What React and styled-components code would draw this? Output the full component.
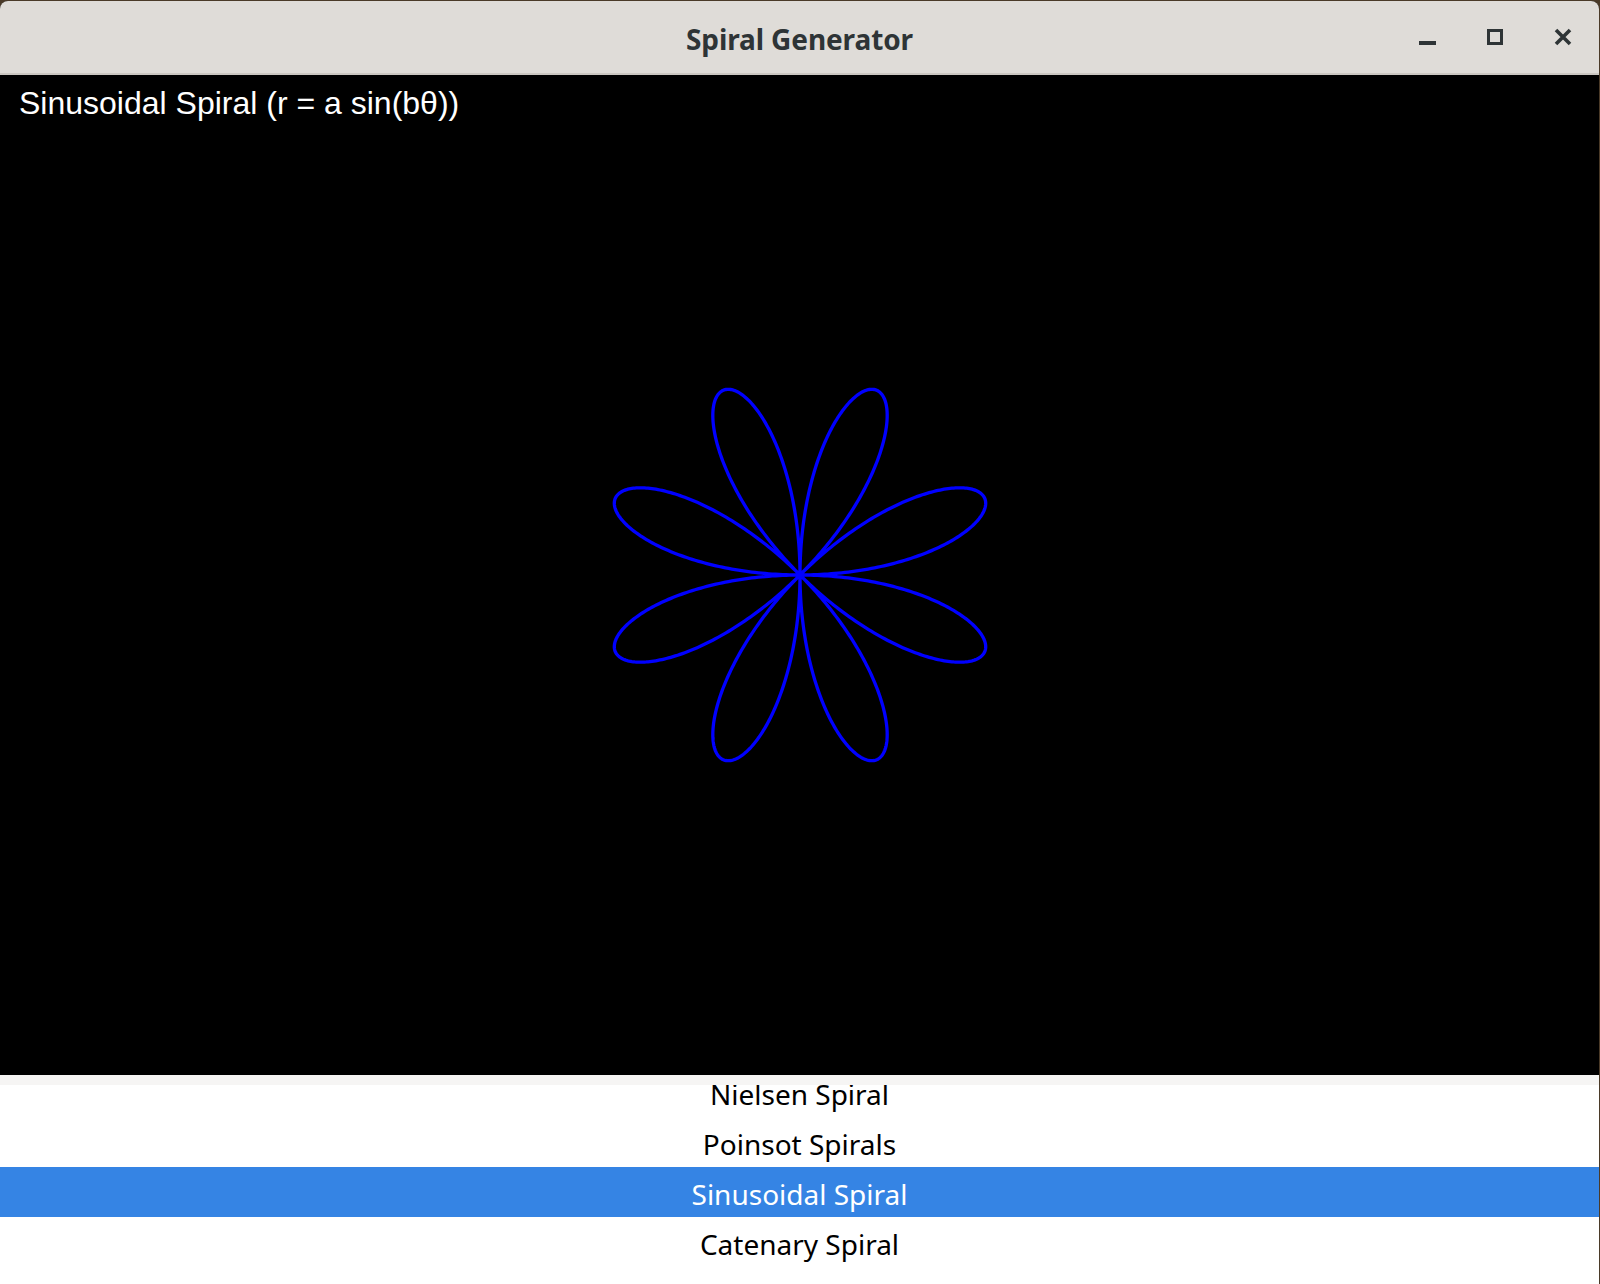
import React from "react";
import styled, { createGlobalStyle } from "styled-components";

const GlobalStyle = createGlobalStyle`
  html, body {
    margin: 0;
    padding: 0;
    background: #4a3a28;
    overflow: hidden;
  }
  #root {
    width: 1600px;
    height: 1284px;
  }
`;

const Window = styled.div`
  width: 1599px;
  height: 1283px;
  margin-top: 1px;
  display: flex;
  flex-direction: column;
  background: #000;
  border-radius: 8px 8px 0 0;
  overflow: hidden;
`;

const TitleBar = styled.div`
  position: relative;
  height: 72px;
  flex: none;
  display: flex;
  align-items: center;
  justify-content: center;
  background: #dfdcd8;
  border-bottom: 2px solid #cbc7c2;
`;

const Title = styled.div`
  font-family: "Noto Sans", "Open Sans", sans-serif;
  font-weight: 700;
  font-size: 28px;
  color: #2e3436;
  letter-spacing: -0.1px;
  margin-top: 3px;
`;

const Controls = styled.div`
  position: absolute;
  right: 18px;
  top: 0;
  bottom: 0;
  display: flex;
  align-items: center;
  gap: 32px;
`;

const CtlButton = styled.button`
  width: 36px;
  height: 36px;
  padding: 0;
  border: none;
  background: transparent;
  display: flex;
  align-items: center;
  justify-content: center;
  color: #2e3436;
  margin-top: 2px;
`;

const Canvas = styled.div`
  position: relative;
  height: 1000px;
  flex: none;
  background: #000;
`;

const Caption = styled.div`
  position: absolute;
  left: 19px;
  top: 9px;
  font-family: "Liberation Sans", Arial, sans-serif;
  font-size: 32px;
  color: #fff;
  line-height: 38px;
`;

const Plot = styled.svg`
  display: block;
  width: 100%;
  height: 100%;
`;

const ListBox = styled.div`
  flex: 1;
  display: flex;
  flex-direction: column;
  background: #fff;
  min-height: 0;
`;

const ListEdge = styled.div`
  height: 10px;
  flex: none;
  background: #f6f5f4;
`;

const Viewport = styled.div`
  flex: 1;
  overflow: hidden;
  min-height: 0;
`;

const Rows = styled.ul`
  list-style: none;
  margin: ${(p) => -p.$offset}px 0 0;
  padding: 0;
`;

const Row = styled.li`
  height: 50px;
  box-sizing: border-box;
  padding-top: 3px;
  display: flex;
  align-items: center;
  justify-content: center;
  font-family: "Noto Sans", "Open Sans", sans-serif;
  font-size: 28px;
  color: ${(p) => (p.$selected ? "#ffffff" : "#000000")};
  background: ${(p) => (p.$selected ? "#3584e4" : "transparent")};
`;

const spirals = [
  "Nielsen Spiral",
  "Poinsot Spirals",
  "Sinusoidal Spiral",
  "Catenary Spiral",
  "Cornu Spiral",
];

function rosePath(cx, cy, a, b) {
  const pts = [];
  const steps = 1440;
  for (let i = 0; i <= steps; i++) {
    const t = (i / steps) * Math.PI * 2;
    const r = a * Math.sin(b * t);
    pts.push(
      `${i === 0 ? "M" : "L"}${(cx + r * Math.cos(t)).toFixed(2)},${(cy - r * Math.sin(t)).toFixed(2)}`
    );
  }
  return pts.join(" ") + " Z";
}

const App = () => {
  const selected = "Sinusoidal Spiral";
  return (
    <>
      <GlobalStyle />
      <Window>
        <TitleBar>
          <Title>Spiral Generator</Title>
          <Controls>
            <CtlButton aria-label="minimize">
              <svg width="18" height="18" viewBox="0 0 18 18">
                <rect x="1" y="12" width="17" height="4" fill="currentColor" />
              </svg>
            </CtlButton>
            <CtlButton aria-label="maximize">
              <svg width="18" height="18" viewBox="0 0 18 18">
                <rect x="2.5" y="1.5" width="13" height="13" fill="none" stroke="currentColor" strokeWidth="3" />
              </svg>
            </CtlButton>
            <CtlButton aria-label="close">
              <svg width="20" height="20" viewBox="0 0 20 20">
                <path d="M3 2 L17 16 M17 2 L3 16" stroke="currentColor" strokeWidth="3.6" strokeLinecap="butt" />
              </svg>
            </CtlButton>
          </Controls>
        </TitleBar>
        <Canvas>
          <Plot viewBox="0 0 1599 1000">
            <path d={rosePath(800, 500, 200, 4)} fill="none" stroke="#0000ff" strokeWidth="3.3" />
          </Plot>
          <Caption>Sinusoidal Spiral (r = a sin(bθ))</Caption>
        </Canvas>
        <ListBox>
          <ListEdge />
          <Viewport>
            <Rows $offset={18}>
              {spirals.map((s) => (
                <Row key={s} $selected={s === selected}>
                  {s}
                </Row>
              ))}
            </Rows>
          </Viewport>
        </ListBox>
      </Window>
    </>
  );
};

export default App;
